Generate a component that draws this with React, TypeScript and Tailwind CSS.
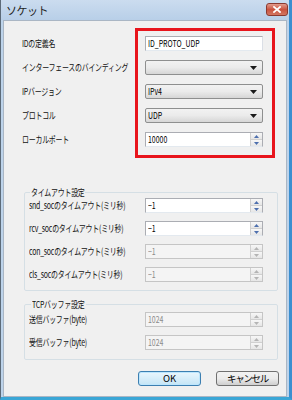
import React from "react";

function Narrow({ children }: { children: React.ReactNode }) {
  return <span className="inline-block origin-left scale-x-[0.73]">{children}</span>;
}

function TextBox({ value }: { value: string }) {
  return (
    <div className="h-[15px] w-[118px] whitespace-nowrap border border-[#abadb3] border-b-[#e3e9ef] border-r-[#dbdfe6] bg-white pl-[2px] text-[9.5px] leading-[13px] text-black">
      <Narrow>{value}</Narrow>
    </div>
  );
}

function Combo({ value }: { value: string }) {
  return (
    <div className="flex h-[15px] w-[118px] items-center justify-between rounded-[2px] border border-[#8e8f8f] bg-gradient-to-b from-[#f2f2f2] via-[#ebebeb] to-[#d6d6d6] pl-[2px] pr-[5px] text-[9.5px] leading-[13px] text-black">
      <Narrow>{value}</Narrow>
      <svg width="7" height="4" viewBox="0 0 7 4">
        <path d="M0 0h7L3.5 4z" fill="#1a1a1a" />
      </svg>
    </div>
  );
}

function Spin({ value, disabled }: { value: string; disabled?: boolean }) {
  const arrow = disabled ? "#b4b4b4" : "#4d6fae";
  return (
    <div
      className={
        "flex h-[15px] w-[118px] border " +
        (disabled ? "border-[#c5c5c5] bg-[#f4f4f4] text-[#8a8a8a]" : "border-[#abadb3] border-b-[#e3e9ef] bg-white text-black")
      }
    >
      <div className="flex-1 whitespace-nowrap pl-[2px] text-[9.5px] leading-[13px]">
        <Narrow>{value}</Narrow>
      </div>
      <div className="flex w-[12px] flex-col border-l border-[#d0d0d0]">
        <div className="flex flex-1 items-center justify-center border-b border-[#d0d0d0] bg-gradient-to-b from-[#f7f7f7] to-[#e6e6e6]">
          <svg width="5" height="3" viewBox="0 0 5 3">
            <path d="M0 3h5L2.5 0z" fill={arrow} />
          </svg>
        </div>
        <div className="flex flex-1 items-center justify-center bg-gradient-to-b from-[#f7f7f7] to-[#e6e6e6]">
          <svg width="5" height="3" viewBox="0 0 5 3">
            <path d="M0 0h5L2.5 3z" fill={arrow} />
          </svg>
        </div>
      </div>
    </div>
  );
}

function Label({ children }: { children: React.ReactNode }) {
  return (
    <div className="whitespace-nowrap text-[9.5px] leading-[15px] tracking-[-0.3px] text-[#111]">
      <Narrow>{children}</Narrow>
    </div>
  );
}

export default function App() {
  return (
    <div className={`relative flex h-[400px] w-[292px] flex-col overflow-hidden border-l border-[#5d6b79] border-r-[3px] border-r-[#3b8fd0] border-b-[3px] border-b-[#3aa6d6] bg-[#bdd3ea] font-["Noto_Sans_CJK_JP","Noto_Sans",sans-serif]`}>
      <div className="flex h-[20px] shrink-0 items-center justify-between bg-gradient-to-b from-[#cbdcef] to-[#b8cfe8] pl-[5px] pr-[1px]">
        <span className="text-[11px] tracking-[-0.5px] text-[#222]">ソケット</span>
        <div className="mt-[-2px] flex h-[13px] w-[22px] items-center justify-center rounded-[3px] border border-[#8b3a30] bg-gradient-to-b from-[#e29b8d] via-[#c9523f] to-[#d27662]">
          <svg width="8" height="7" viewBox="0 0 8 7">
            <path d="M1 1l6 5M7 1L1 6" stroke="white" strokeWidth="1.8" strokeLinecap="square" />
          </svg>
        </div>
      </div>

      <div className="mx-[2px] flex flex-1 flex-col border border-[#aab6c4] bg-[#f0f0f0]">
        <div className="grid grid-cols-[123px_118px] items-center gap-y-[9px] pl-[18px] pt-[15px]">
          <Label>IDの定義名</Label>
          <TextBox value="ID_PROTO_UDP" />
          <Label>インターフェースのバインディング</Label>
          <Combo value="" />
          <Label>IPバージョン</Label>
          <Combo value="IPv4" />
          <Label>プロトコル</Label>
          <Combo value="UDP" />
          <Label>ローカルポート</Label>
          <Spin value="10000" />
        </div>

        <fieldset className="ml-[20px] mr-[8px] mt-[39px] rounded-[2px] border border-[#d5dfe5] pb-[8px] pl-[4px]">
          <legend className="ml-[1px] whitespace-nowrap px-[1px] text-[9.5px] leading-[12px] tracking-[-0.3px] text-[#111]">
            <span className="mr-[-20px] inline-block origin-left scale-x-[0.73]">タイムアウト設定</span>
          </legend>
          <div className="grid grid-cols-[116px_118px] items-center gap-y-[8px]">
            <Label>snd_socのタイムアウト(ミリ秒)</Label>
            <Spin value="−1" />
            <Label>rcv_socのタイムアウト(ミリ秒)</Label>
            <Spin value="−1" />
            <Label>con_socのタイムアウト(ミリ秒)</Label>
            <Spin value="−1" disabled />
            <Label>cls_socのタイムアウト(ミリ秒)</Label>
            <Spin value="−1" disabled />
          </div>
        </fieldset>

        <fieldset className="ml-[20px] mr-[8px] mt-[7px] rounded-[2px] border border-[#d5dfe5] pb-[9px] pl-[4px] pt-[2px]">
          <legend className="ml-[2px] whitespace-nowrap px-[1px] text-[9.5px] leading-[12px] tracking-[-0.3px] text-[#111]">
            <span className="mr-[-19px] inline-block origin-left scale-x-[0.73]">TCPバッファ設定</span>
          </legend>
          <div className="grid grid-cols-[116px_118px] items-center gap-y-[8px]">
            <Label>送信バッファ(byte)</Label>
            <Spin value="1024" disabled />
            <Label>受信バッファ(byte)</Label>
            <Spin value="1024" disabled />
          </div>
        </fieldset>

        <div className="mt-[11px] flex justify-end gap-[15px] pr-[7px]">
          <button className="h-[15px] w-[63px] rounded-[3px] border border-[#3c7fb1] bg-gradient-to-b from-[#eaf6fd] to-[#c4e5f6] text-[9.5px] leading-[13px] text-black shadow-[inset_0_0_0_1px_#bde6fd]">
            OK
          </button>
          <button className="h-[15px] w-[63px] whitespace-nowrap rounded-[3px] border border-[#707070] bg-gradient-to-b from-[#f2f2f2] via-[#ebebeb] to-[#cfcfcf] text-[9.5px] leading-[13px] tracking-[-1.3px] text-black">
            キャンセル
          </button>
        </div>
      </div>

      <div className="pointer-events-none absolute left-[134px] top-[28px] h-[130px] w-[140px] border-[3px] border-[#e8141c]" />
    </div>
  );
}
